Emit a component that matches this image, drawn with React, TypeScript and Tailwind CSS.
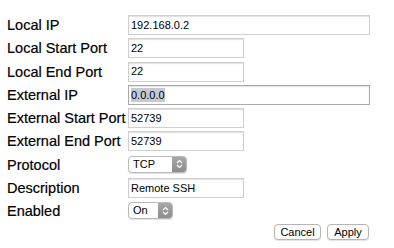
import React from "react";

function Field({ value, width, focused }: { value: string; width: string; focused?: boolean }) {
  return (
    <div
      className={`flex h-[20px] items-center border bg-white pl-[2px] text-[11px] text-black shadow-[inset_0_1px_1px_rgba(0,0,0,0.12)] ${width} ${
        focused ? "border-[#a9a9a9]" : "border-[#cfcfcf]"
      }`}
    >
      {focused ? <span className="bg-[#c3cad5] leading-[14px]">{value}</span> : value}
    </div>
  );
}

function PopUp({ value, width }: { value: string; width: string }) {
  return (
    <div
      className={`mt-[1px] flex h-[17px] overflow-hidden rounded-[4px] border border-[#b9b9b9] bg-white text-[11px] text-black shadow-[0_1px_1px_rgba(0,0,0,0.12)] ${width}`}
    >
      <div className="flex flex-1 items-center pl-[4px]">{value}</div>
      <div className="flex w-[14px] flex-col items-center justify-center bg-gradient-to-b from-[#a8a8a8] to-[#8c8c8c]">
        <svg width="7" height="10" viewBox="0 0 7 10" fill="none">
          <path d="M1 4 L3.5 1.5 L6 4" stroke="white" strokeWidth="1.2" />
          <path d="M1 6 L3.5 8.5 L6 6" stroke="white" strokeWidth="1.2" />
        </svg>
      </div>
    </div>
  );
}

function Row({ label, children }: { label: string; children: React.ReactNode }) {
  return (
    <div className="flex h-[23.25px] items-start">
      <div className="w-[121px] pt-[1px] text-[14.5px] leading-[18px] text-black [-webkit-text-stroke:0.2px_black]">{label}</div>
      {children}
    </div>
  );
}

export default function App() {
  return (
    <div className="h-[248px] w-[394px] bg-white pl-[7px] pt-[15px]" style={{ fontFamily: '"Liberation Sans", Arial, sans-serif' }}>
      <Row label="Local IP">
        <Field value="192.168.0.2" width="w-[242px]" />
      </Row>
      <Row label="Local Start Port">
        <Field value="22" width="w-[116px]" />
      </Row>
      <Row label="Local End Port">
        <Field value="22" width="w-[116px]" />
      </Row>
      <Row label="External IP">
        <Field value="0.0.0.0" width="w-[242px]" focused />
      </Row>
      <Row label="External Start Port">
        <Field value="52739" width="w-[116px]" />
      </Row>
      <Row label="External End Port">
        <Field value="52739" width="w-[116px]" />
      </Row>
      <Row label="Protocol">
        <PopUp value="TCP" width="w-[59px]" />
      </Row>
      <Row label="Description">
        <Field value="Remote SSH" width="w-[116px]" />
      </Row>
      <Row label="Enabled">
        <PopUp value="On" width="w-[45px]" />
      </Row>
      <div className="flex justify-end gap-[6px] pr-[25px]">
        <button className="h-[16px] w-[47px] rounded-[4px] border border-[#b5b5b5] bg-white text-[11px] leading-[14px] text-black shadow-[0_1px_1px_rgba(0,0,0,0.12)]">
          Cancel
        </button>
        <button className="h-[16px] w-[42px] rounded-[4px] border border-[#b5b5b5] bg-white text-[11px] leading-[14px] text-black shadow-[0_1px_1px_rgba(0,0,0,0.12)]">
          Apply
        </button>
      </div>
    </div>
  );
}
